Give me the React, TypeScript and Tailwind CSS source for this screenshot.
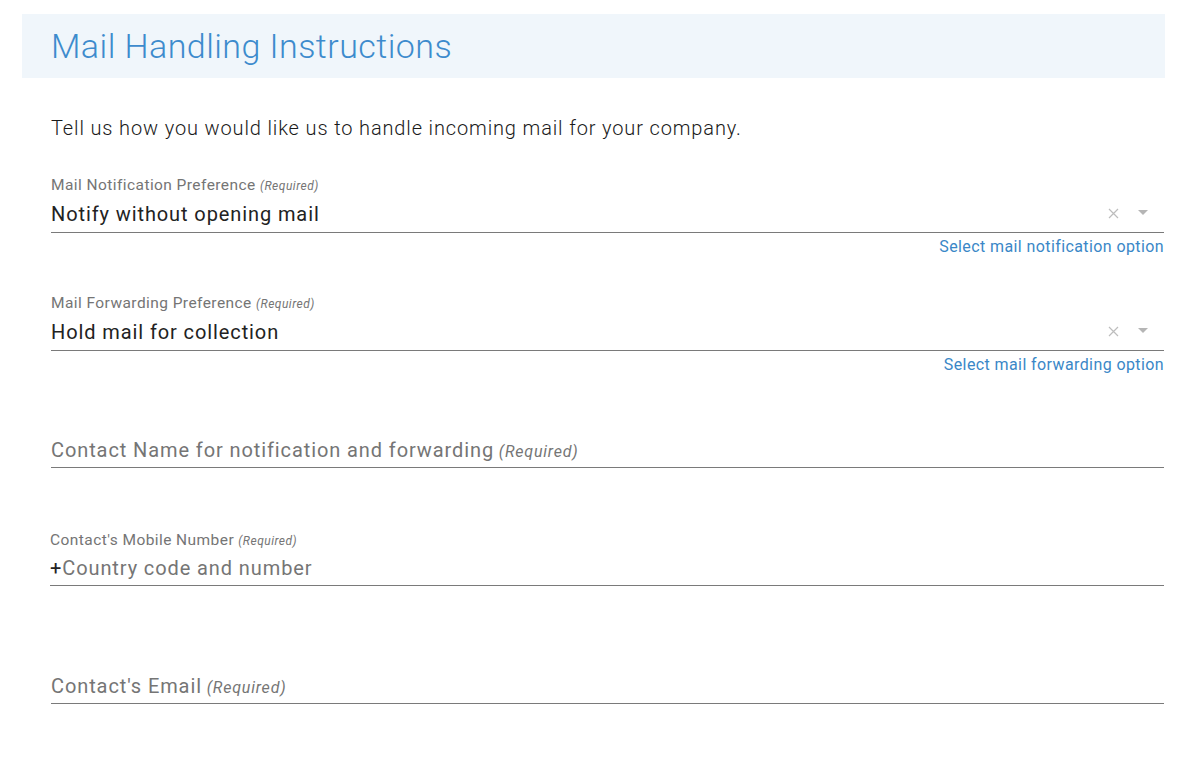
export default function App() {
  return (
    <div className="min-h-screen bg-white pt-[14px] pl-[22px] pr-[27px] font-['Roboto',sans-serif]">
      {/* Header */}
      <div className="h-[64px] bg-[#f0f6fb] flex items-center pl-[29px]">
        <h1 className="text-[34px] tracking-[0.45px] font-light text-[#3d8bcd] leading-none">Mail Handling Instructions</h1>
      </div>

      <div className="pl-[29px] pr-[1px]">
        <p className="mt-[36px] h-[28px] text-[20px] tracking-[0.86px] leading-[28px] font-light text-[#1a1a1a]">
          Tell us how you would like us to handle incoming mail for your company.
        </p>

        {/* Select 1 */}
        <div className="mt-[33px]">
          <Label text="Mail Notification Preference" />
          <SelectRow value="Notify without opening mail" />
          <Helper text="Select mail notification option" />
        </div>

        {/* Select 2 */}
        <div className="mt-[36px]">
          <Label text="Mail Forwarding Preference" />
          <SelectRow value="Hold mail for collection" />
          <Helper text="Select mail forwarding option" />
        </div>

        {/* Contact name */}
        <div className="mt-[57px]">
          <TextRow placeholder="Contact Name for notification and forwarding" required />
        </div>

        {/* Mobile */}
        <div className="mt-[62px] -ml-[1px]">
          <Label text="Contact's Mobile Number" />
          <TextRow placeholder="Country code and number" prefix="+" />
        </div>

        {/* Email */}
        <div className="mt-[82px]">
          <TextRow placeholder="Contact's Email" required />
        </div>
      </div>
    </div>
  );
}

function Label({ text }: { text: string }) {
  return (
    <div className="h-[20px] text-[15.5px] tracking-[0.43px] leading-[20px] text-[#757575] whitespace-nowrap">
      {text} <span className="italic text-[12px] tracking-[0.5px] leading-none">(Required)</span>
    </div>
  );
}

function Helper({ text }: { text: string }) {
  return (
    <p className="mt-[4px] h-[20px] text-right text-[16px] tracking-[0.4px] leading-[20px] text-[#3a87c7]">{text}</p>
  );
}

function TextRow({ placeholder, required, prefix }: { placeholder: string; required?: boolean; prefix?: string }) {
  return (
    <div className="h-[36px] pt-[4px] border-b border-[#7a7a7a] text-[20px] tracking-[0.9px] leading-[28px] text-[#757575] whitespace-nowrap overflow-hidden">
      {prefix && <span className="text-[#222]">{prefix}</span>}
      {placeholder}
      {required && <span className="italic text-[16px] tracking-[0.8px] leading-none"> (Required)</span>}
    </div>
  );
}

function SelectRow({ value }: { value: string }) {
  return (
    <div className="h-[38px] flex items-center pt-[5px] pb-[4px] border-b border-[#7a7a7a]">
      <span className="flex-1 text-[20px] tracking-[0.9px] leading-[28px] text-[#222]">{value}</span>
      <svg width="11" height="11" viewBox="0 0 11 11" className="mr-[19px] mt-[-2px]">
        <path d="M1 1L10 10M10 1L1 10" stroke="#bdbdbd" strokeWidth="1.2" />
      </svg>
      <svg width="10" height="6" viewBox="0 0 10 6" className="mr-[16px] mt-[-2px]">
        <path d="M0 0H10L5 5Z" fill="#b5b5b5" />
      </svg>
    </div>
  );
}
